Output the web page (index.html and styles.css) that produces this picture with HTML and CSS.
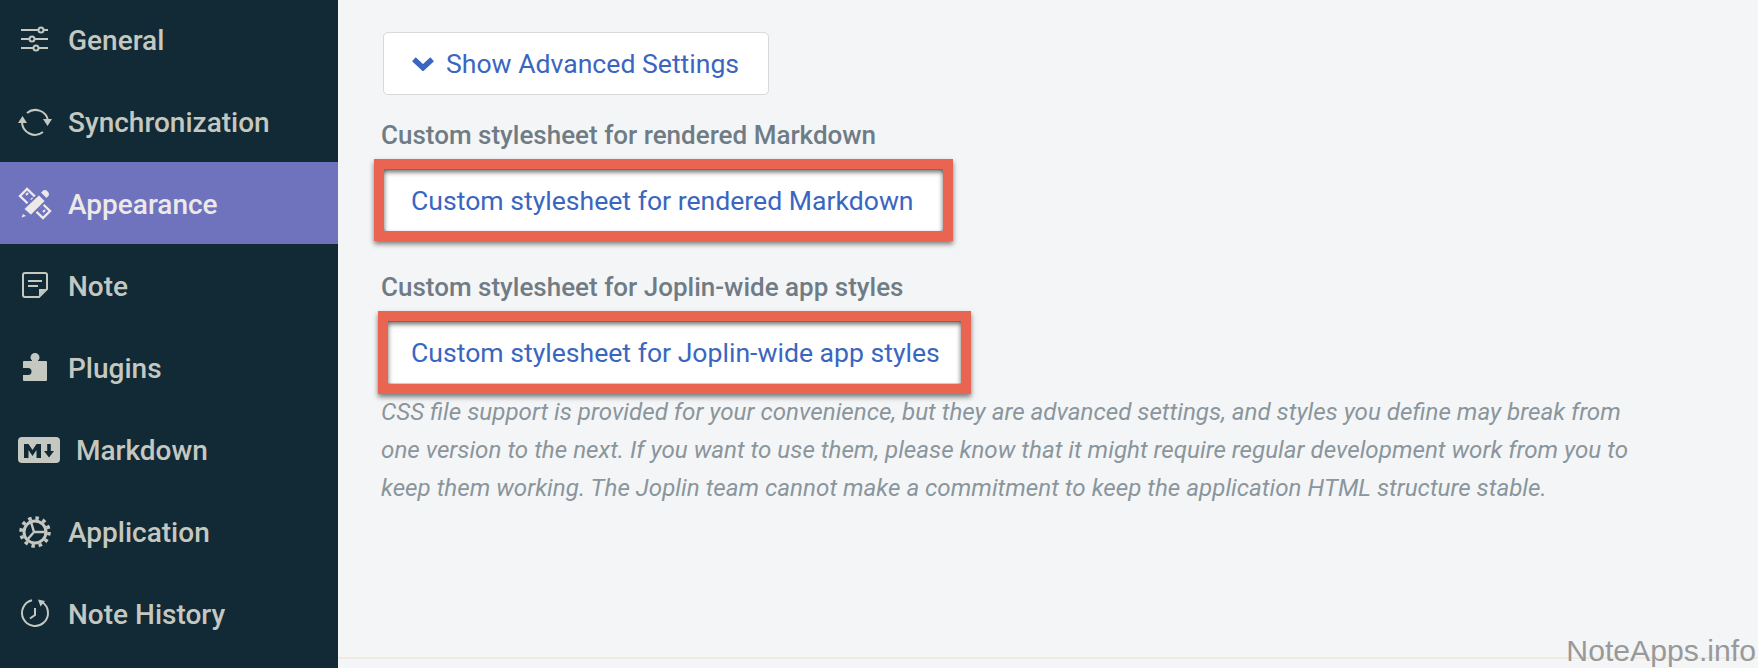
FILE: index.html
```html
<!DOCTYPE html>
<html lang="en">
<head>
  <meta charset="UTF-8">
  <title>Options - Appearance</title>
  <link rel="stylesheet" href="styles.css">
</head>
<body>
  <div class="app">
    <nav class="sidebar">
      <a class="nav-item">
        <svg class="icon" viewBox="0 0 34 34" fill="none" stroke="currentColor" stroke-width="2">
          <path d="M3 7h27M3 16h27M3 25h27"/>
          <circle class="knob" cx="23" cy="7" r="2.500"/><circle class="knob" cx="14" cy="16" r="2.500"/><circle class="knob" cx="18" cy="25" r="2.500"/>
        </svg>
        <span>General</span>
      </a>
      <a class="nav-item">
        <svg class="icon" viewBox="0 0 34 34" fill="none" stroke="currentColor" stroke-width="2">
          <path d="M9 8A13 13 0 0 1 30 15"/>
          <path d="M25 27A13 13 0 0 1 4 17"/>
          <path d="M25 14h9l-4.500 7zM0 18h9L4.500 11z" fill="currentColor" stroke="none"/>
        </svg>
        <span>Synchronization</span>
      </a>
      <a class="nav-item active">
        <svg class="icon" viewBox="0 0 34 34" fill="none" stroke="currentColor">
          <path d="M2 9l7-7 23 22-7 7z" stroke-width="2.400"/>
          <path d="M8 8l2-2M13 13l2-2M21 21l2-2M25 25l2-2" stroke-width="2"/>
          <path d="M5 22L21 7l7 7-15 15z" fill="currentColor" stroke="#6f73bd" stroke-width="2"/>
          <path d="M23 5.500l3-2.500c3 0 5 2 5 5l-2.500 3z" fill="currentColor" stroke="none"/>
          <path d="M5 27l3 2-4.500 1.500z" fill="currentColor" stroke="none"/>
        </svg>
        <span>Appearance</span>
      </a>
      <a class="nav-item">
        <svg class="icon" viewBox="0 0 34 34" fill="none" stroke="currentColor" stroke-width="2">
          <path d="M7 4h20a2 2 0 0 1 2 2v14l-8 8H7a2 2 0 0 1-2-2V6a2 2 0 0 1 2-2z"/>
          <path d="M10 12h14M10 17h10"/>
          <path d="M21 27v-7h7z" fill="currentColor" stroke="none"/>
        </svg>
        <span>Note</span>
      </a>
      <a class="nav-item">
        <svg class="icon" viewBox="0 0 34 34" fill="currentColor">
          <path d="M6 10h8v-.5c-1-.8-1.500-1.800-1.500-3a4.500 4.500 0 0 1 9 0c0 1.200-.5 2.200-1.500 3v.5h8a1 1 0 0 1 1 1v18a1 1 0 0 1-1 1H6a1 1 0 0 1-1-1v-5h5a3.500 3.500 0 0 0 0-7H5v-6a1 1 0 0 1 1-1z"/>
        </svg>
        <span>Plugins</span>
      </a>
      <a class="nav-item">
        <svg class="icon icon-wide" viewBox="0 0 42 26">
          <rect width="42" height="26" rx="4" fill="currentColor"/>
          <path class="md-mark" d="M6 21V7h4.500l4 6 4-6H23v14h-4.500v-8l-4 6-4-6v8z"/>
          <path class="md-mark" d="M29.200 7h3.600v7h3.200l-5 6.500-5-6.500h3.200z"/>
        </svg>
        <span>Markdown</span>
      </a>
      <a class="nav-item">
        <svg class="icon" viewBox="0 0 34 34" fill="none" stroke="currentColor">
          <circle cx="17" cy="17" r="11" stroke-width="3"/>
          <circle cx="17" cy="17" r="14" stroke-width="3.500" stroke-dasharray="3.500 3.830"/>
          <path d="M16 17l-3-10M16 17h11M16 17l-7 8" stroke-width="2.400"/>
        </svg>
        <span>Application</span>
      </a>
      <a class="nav-item">
        <svg class="icon" viewBox="0 0 34 34" fill="none" stroke="currentColor" stroke-width="2">
          <path d="M24 5A13 13 0 1 1 14 3.300"/>
          <path d="M17 11v7l-5 3.500"/>
          <path d="M20 2.500l7 1.500-4.500 5.500z" fill="currentColor" stroke="none"/>
        </svg>
        <span>Note History</span>
      </a>
    </nav>

    <main class="content">
      <button class="btn">
        <svg class="chevron" viewBox="0 0 22 14" fill="none" stroke="currentColor" stroke-width="5">
          <path d="M2.500 3L11 11l8.500-8"/>
        </svg>
        Show Advanced Settings
      </button>

      <div class="field">
        <div class="field-label">Custom stylesheet for rendered Markdown</div>
        <button class="btn marked marked-first">Custom stylesheet for rendered Markdown</button>
      </div>

      <div class="field">
        <div class="field-label">Custom stylesheet for Joplin-wide app styles</div>
        <button class="btn marked marked-second">Custom stylesheet for Joplin-wide app styles</button>
      </div>

      <p class="note">CSS file support is provided for your convenience, but they are advanced settings, and styles you define may break from one version to the next. If you want to use them, please know that it might require regular development work from you to keep them working. The Joplin team cannot make a commitment to keep the application HTML structure stable.</p>
    </main>
  </div>

  <div class="watermark">NoteApps.info</div>
</body>
</html>
```

FILE: styles.css
```css
body {
  margin: 0;
  height: 668px;
  overflow: hidden;
  font-family: 'Roboto', sans-serif;
  background: #f4f5f7;
}

.app {
  display: flex;
  height: 668px;
}

/* Sidebar */
.sidebar {
  width: 338px;
  flex-shrink: 0;
  margin-top: -2px;
  background: #112a35;
  color: #c4c8c0;
}

.nav-item {
  display: flex;
  align-items: center;
  gap: 16px;
  height: 82px;
  padding: 2px 0 0 18px;
  box-sizing: border-box;
  font-size: 28px;
  font-weight: 500;
}

.nav-item.active {
  background: #6f73bd;
  color: #ece9e8;
}

.icon {
  width: 34px;
  height: 34px;
  flex-shrink: 0;
}

.icon-wide {
  width: 42px;
  height: 26px;
}

.knob {
  fill: #112a35;
}

.md-mark {
  fill: #112a35;
}

/* Main column */
.content {
  flex: 1;
  height: 659px;
  padding: 32px 0 0 43px;
  box-sizing: border-box;
  border-bottom: 2px solid #f0ebdd;
}

.btn {
  display: flex;
  align-items: center;
  gap: 11px;
  position: relative;
  height: 63px;
  margin-left: 2px;
  padding: 0 29px 0 27px;
  box-sizing: border-box;
  background: #fff;
  border: 1px solid #d6dadd;
  border-radius: 5px;
  color: #3a66c0;
  font-family: inherit;
  font-size: 26.600px;
}

.chevron {
  width: 24px;
  height: 15px;
}

.field {
  margin-top: 23px;
}

.field + .field {
  margin-top: 38px;
}

.field-label {
  height: 51px;
  line-height: 34px;
  color: #6f7c85;
  font-size: 26px;
  font-weight: 500;
}

/* Red annotation drawn over the screenshot */
.marked::after {
  content: '';
  position: absolute;
  border: 10px solid #e96552;
  box-shadow: 0 3px 5px rgba(0, 0, 0, 0.5), inset 0 3px 5px rgba(0, 0, 0, 0.6);
}

.marked-first::after {
  top: -11px;
  right: -10px;
  bottom: -10px;
  left: -10px;
}

.marked-second::after {
  top: -11px;
  right: -2px;
  bottom: -11px;
  left: -6px;
}

.note {
  max-width: 1270px;
  margin: 9px 0 0;
  color: #8a969c;
  font-size: 24.200px;
  font-style: italic;
  line-height: 38px;
}

.watermark {
  position: absolute;
  right: 2px;
  bottom: 0;
  color: #999;
  font-family: 'Liberation Sans', sans-serif;
  font-size: 30.200px;
}
```
